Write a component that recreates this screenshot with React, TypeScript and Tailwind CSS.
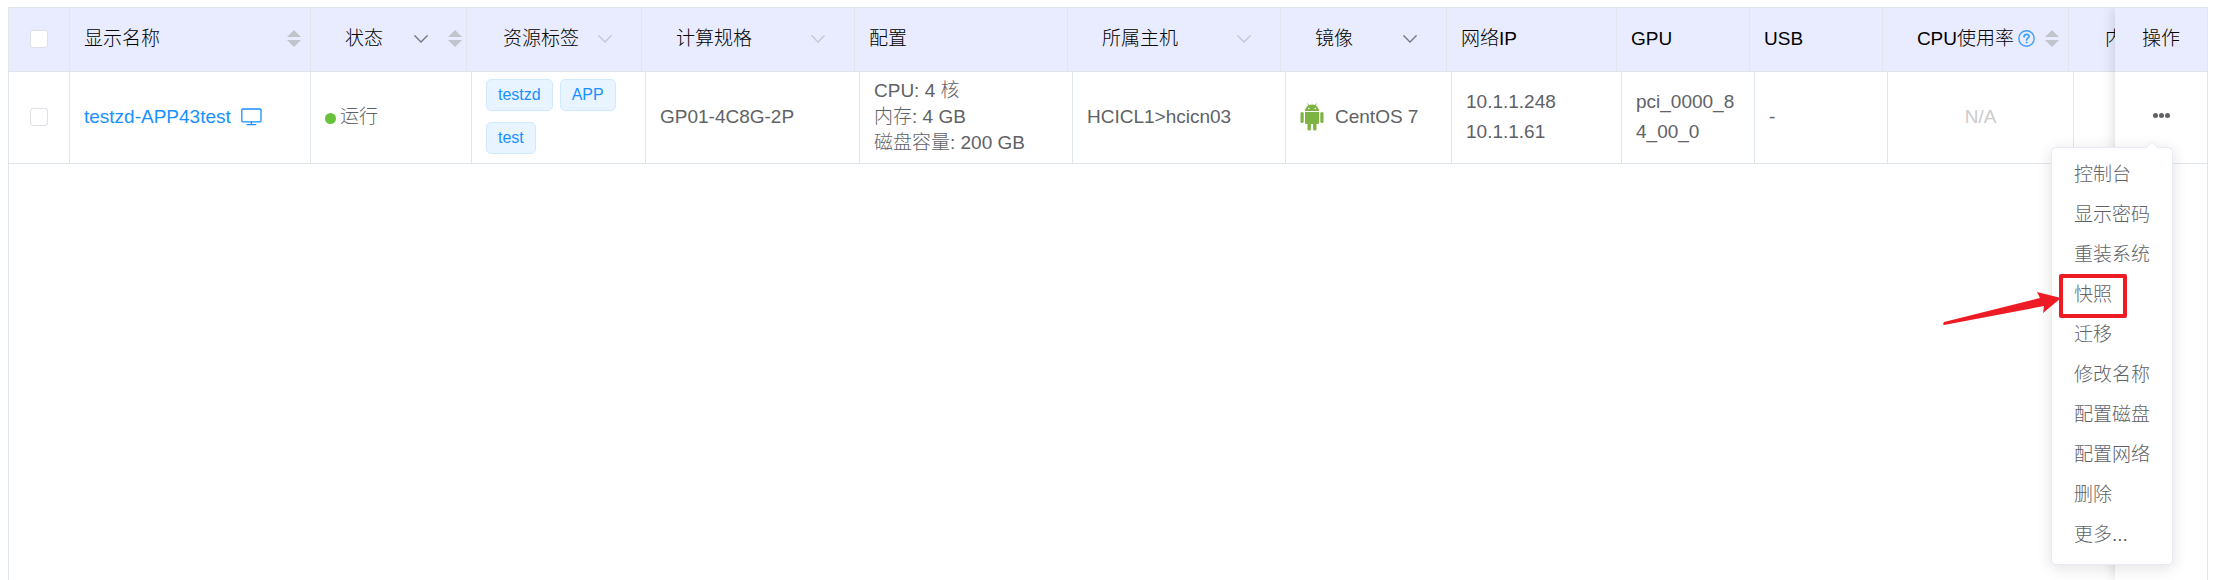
import React from "react";

const HEADER_COLS = [61, 241, 156, 175, 213, 213, 213, 166, 170, 133, 133, 186, 186];
const BODY_COLS = [61, 241, 161, 174, 214, 213, 213, 166, 170, 133, 133, 186, 186];

const MENU = ["控制台", "显示密码", "重装系统", "快照", "迁移", "修改名称", "配置磁盘", "配置网络", "删除", "更多..."];

function Cols({ widths }: { widths: number[] }) {
  return (
    <colgroup>
      {widths.map((w, i) => (
        <col key={i} style={{ width: w }} />
      ))}
    </colgroup>
  );
}

function Sort() {
  return (
    <button type="button" aria-label="排序" className="flex shrink-0">
      <svg width="14" height="17" viewBox="0 0 14 17" fill="#c0c4cc">
        <path d="M0 7L7 0L14 7ZM0 10H14L7 17Z" />
      </svg>
    </button>
  );
}

function Chevron({ dark = false }: { dark?: boolean }) {
  return (
    <button type="button" aria-label="筛选" className={dark ? "flex shrink-0 text-[#73767c]" : "flex shrink-0 text-[#c4c7d0]"}>
      <svg width="14" height="8" viewBox="0 0 14 8" fill="none" stroke="currentColor" strokeWidth="1.3" strokeLinecap="round">
        <path d="M0.8 0.8L7 7L13.2 0.8" />
      </svg>
    </button>
  );
}

function Check({ label }: { label: string }) {
  return (
    <input
      type="checkbox"
      aria-label={label}
      className="mx-auto block size-[18px] appearance-none rounded-[3px] border border-[#dcdfe6] bg-white"
    />
  );
}

function Th({ children, className = "px-[14px]" }: { children?: React.ReactNode; className?: string }) {
  return (
    <th scope="col" className="h-16 overflow-hidden border-r border-b border-[#dfe6ec] p-0 pb-[2px] text-left font-light">
      <div className={`flex items-center whitespace-nowrap ${className}`}>{children}</div>
    </th>
  );
}

function Td({ children, className = "px-[14px]" }: { children?: React.ReactNode; className?: string }) {
  return (
    <td className="h-[92px] border-r border-b border-[#dfe6ec] p-0 pb-[2px]">
      <div className={className}>{children}</div>
    </td>
  );
}

function Tag({ children }: { children: React.ReactNode }) {
  return (
    <span className="flex h-8 items-center rounded-[5px] border border-[#d1e9ff] bg-[#e8f4ff] px-[11px] text-base text-[#1890ff]">
      {children}
    </span>
  );
}

function Monitor() {
  return (
    <svg width="21" height="18" viewBox="0 0 21 18" fill="none" stroke="#1890ff" strokeWidth="1.3" strokeLinecap="round">
      <rect x="0.8" y="1" width="19.2" height="12.8" rx="1" />
      <path d="M10.4 14V16.3M6 16.6H14.8" />
    </svg>
  );
}

function Android() {
  return (
    <svg width="24" height="28" viewBox="0 0 24 28" fill="#7cb342">
      <path d="M5 8C5 5.2 6.5 3.4 8.3 2.4L7 .5L7.5 .2L9 2C10.9 1.3 13.1 1.3 15 2L16.5 .2L17 .5L15.7 2.4C17.5 3.4 19 5.2 19 8Z" />
      <path d="M5 9H19V19.5Q19 21 17.5 21H6.5Q5 21 5 19.5Z" />
      <rect x="0.5" y="9" width="3.2" height="11" rx="1.6" />
      <rect x="20.3" y="9" width="3.2" height="11" rx="1.6" />
      <rect x="7.5" y="18" width="3.4" height="9.5" rx="1.6" />
      <rect x="13.1" y="18" width="3.4" height="9.5" rx="1.6" />
      <circle cx="8.8" cy="5.5" r="0.8" fill="#fff" />
      <circle cx="15.2" cy="5.5" r="0.8" fill="#fff" />
    </svg>
  );
}

function Help() {
  return (
    <svg width="17" height="17" viewBox="0 0 17 17" fill="none" stroke="#409eff" strokeLinecap="round">
      <circle cx="8.5" cy="8.5" r="7.7" strokeWidth="1.4" />
      <path d="M6.1 6.8C6.1 5.2 7.1 4.3 8.6 4.3C10 4.3 11 5.2 11 6.5C11 8.1 8.6 8.3 8.6 10" strokeWidth="1.7" />
      <circle cx="8.6" cy="12.5" r="0.5" strokeWidth="1" fill="#409eff" />
    </svg>
  );
}

function Menu() {
  return (
    <div className="absolute top-[139px] right-[34px] z-20 rounded-[5px] border border-[#e6ebf5] bg-white py-2 shadow-[0_3px_16px_rgba(0,0,0,0.12)]">
      <svg className="absolute -top-[7px] right-[13px]" width="14" height="8" viewBox="0 0 14 8">
        <path d="M0 8L7 1L14 8Z" fill="#fff" />
        <path d="M0 7.5L7 0.7L14 7.5" fill="none" stroke="#e6ebf5" />
      </svg>
      <ul>
        {MENU.map((item) => (
          <li key={item} className="relative">
            <button type="button" className="block h-10 w-full px-[22px] pb-[2px] text-left font-light whitespace-nowrap">
              {item}
            </button>
            {item === "快照" && (
              <>
                <span className="pointer-events-none absolute -top-[2px] left-[7px] h-11 w-[68px] rounded-[2px] border-4 border-[#ed1c24]" />
                <svg className="pointer-events-none absolute top-4 -left-[109px]" width="120" height="34" viewBox="0 0 120 34">
                  <path d="M0 32L1 30L97 6L94 0L118 6L100 21L101 14L1 33Z" fill="#ed1c24" />
                </svg>
              </>
            )}
          </li>
        ))}
      </ul>
    </div>
  );
}

export default function App() {
  return (
    <main className="flex min-h-screen flex-col bg-white pt-[7px] pr-[9px] pl-2 font-['Liberation_Sans','Noto_Sans_CJK_SC',sans-serif] text-[19px] leading-[26px] font-light text-[#606266]">
      <div className="relative flex flex-1 border-x border-t border-[#dfe6ec]">
        <div className="flex min-w-0 flex-1 overflow-hidden">
          <div className="min-w-0 flex-1 overflow-hidden">
            <table className="w-0 table-fixed border-separate border-spacing-0 bg-[#e9ecfe] text-black">
              <Cols widths={HEADER_COLS} />
              <thead>
                <tr>
                  <Th className=""><Check label="全选" /></Th>
                  <Th className="justify-between pr-[9px] pl-[14px]">显示名称<Sort /></Th>
                  <Th className="pl-[34px]">
                    状态
                    <span className="ml-[31px] flex items-center gap-[20px]"><Chevron dark /><Sort /></span>
                  </Th>
                  <Th className="justify-between pr-[29px] pl-[36px]">资源标签<Chevron /></Th>
                  <Th className="justify-between pr-[29px] pl-[34px]">计算规格<Chevron /></Th>
                  <Th>配置</Th>
                  <Th className="justify-between pr-[29px] pl-[34px]">所属主机<Chevron /></Th>
                  <Th className="justify-between pr-[29px] pl-[34px]">镜像<Chevron dark /></Th>
                  <Th>网络IP</Th>
                  <Th>GPU</Th>
                  <Th>USB</Th>
                  <Th className="justify-end pr-[9px]">CPU使用率<span className="ml-1 flex items-center gap-[10px]"><Help /><Sort /></span></Th>
                  <Th className="pl-[36px]">内</Th>
                </tr>
              </thead>
            </table>
            <table className="w-0 table-fixed border-separate border-spacing-0">
              <Cols widths={BODY_COLS} />
              <tbody>
                <tr>
                  <Td className=""><Check label="testzd-APP43test" /></Td>
                  <Td><a href="#vm" className="flex items-center gap-[10px] text-[#1890ff]">testzd-APP43test<Monitor /></a></Td>
                  <Td className="flex items-center gap-1 px-[14px]">
                    <span className="mt-1 size-[11px] rounded-full bg-[#67c23a]" />运行
                  </Td>
                  <Td className="flex flex-wrap gap-x-[7px] gap-y-[11px] px-[14px]"><Tag>testzd</Tag><Tag>APP</Tag><Tag>test</Tag></Td>
                  <Td>GP01-4C8G-2P</Td>
                  <Td>CPU: 4 核<br />内存: 4 GB<br />磁盘容量: 200 GB</Td>
                  <Td>HCICL1&gt;hcicn03</Td>
                  <Td className="flex items-center gap-[11px] px-[14px]"><Android />CentOS 7</Td>
                  <Td className="px-[14px] leading-[30px]">10.1.1.248<br />10.1.1.61</Td>
                  <Td className="px-[14px] leading-[30px] break-all">pci_0000_84_00_0</Td>
                  <Td>-</Td>
                  <Td className="text-center text-[#cccccc]">N/A</Td>
                  <Td />
                </tr>
              </tbody>
            </table>
          </div>
          <div className="z-10 w-[92px] shrink-0 bg-white shadow-[0_0_13px_rgba(0,0,0,0.16)]">
            <table className="w-full table-fixed border-separate border-spacing-0">
              <thead className="bg-[#e9ecfe] text-black">
                <tr>
                  <th scope="col" className="h-16 border-b border-[#dfe6ec] p-0 pb-[2px] font-light">操作</th>
                </tr>
              </thead>
              <tbody>
                <tr>
                  <td className="h-[92px] border-b border-[#dfe6ec] p-0 pb-1">
                    <button type="button" aria-label="更多操作" className="mx-auto flex gap-px">
                      <span className="size-[5px] rounded-full bg-[#606266]" />
                      <span className="size-[5px] rounded-full bg-[#606266]" />
                      <span className="size-[5px] rounded-full bg-[#606266]" />
                    </button>
                  </td>
                </tr>
              </tbody>
            </table>
          </div>
        </div>
        <Menu />
      </div>
    </main>
  );
}
